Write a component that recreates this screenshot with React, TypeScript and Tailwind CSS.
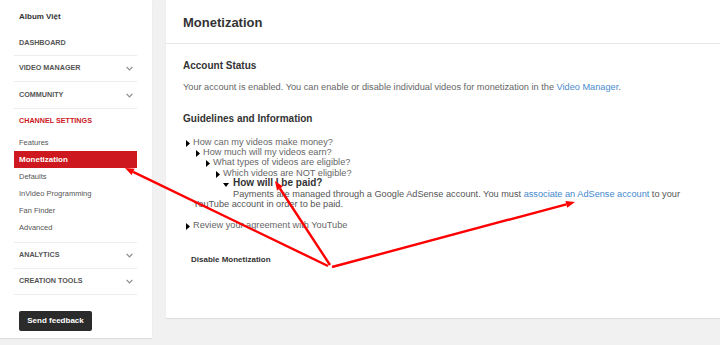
import React from "react";

function Chevron() {
  return (
    <svg width="7" height="5" viewBox="0 0 7 5" className="shrink-0">
      <path d="M0.6 0.8 L3.5 3.8 L6.4 0.8" fill="none" stroke="#8a8a8a" strokeWidth="1.2" />
    </svg>
  );
}

function NavSection({ label }: { label: string }) {
  return (
    <div className="h-[26px] border-t border-[#ececec] flex items-center justify-between pl-[5px] pr-[4px] text-[7.2px] font-bold text-[#555]">
      <span>{label}</span>
      <Chevron />
    </div>
  );
}

const SETTINGS = ["Features", "Monetization", "Defaults", "InVideo Programming", "Fan Finder", "Advanced"];

function Sidebar() {
  return (
    <aside className="w-[152px] h-[338px] shrink-0 bg-white pl-[14px] pr-[15px] shadow-[0_1px_1px_rgba(0,0,0,0.08)]">
      <div className="h-[34px] flex items-center pl-[5px] text-[8px] font-bold text-[#333]">Album Việt</div>
      <div className="h-[21px] pt-[4px] pl-[5px] leading-[10px] text-[7.2px] font-bold text-[#555]">DASHBOARD</div>
      <NavSection label="VIDEO MANAGER" />
      <div className="h-[27px] border-t border-[#ececec] flex items-center justify-between pl-[5px] pr-[4px] text-[7.2px] font-bold text-[#555]">
        <span>COMMUNITY</span>
        <Chevron />
      </div>
      <div className="border-t border-[#ececec] pb-[6px]">
        <div className="h-[25px] flex items-center pl-[5px] text-[7.2px] font-bold text-[#cc181e]">CHANNEL SETTINGS</div>
        {SETTINGS.map((s) =>
          s === "Monetization" ? (
            <div key={s} className="h-[17px] flex items-center pl-[5px] bg-[#cc181e] text-white text-[8px] font-bold">
              {s}
            </div>
          ) : (
            <div key={s} className="h-[17px] flex items-center pl-[5px] text-[#555] text-[7.5px]">
              {s}
            </div>
          )
        )}
      </div>
      <NavSection label="ANALYTICS" />
      <NavSection label="CREATION TOOLS" />
      <div className="border-t border-[#ececec] pt-[11px] pl-[5px]">
        <button className="w-[73px] h-[20px] rounded-[2px] bg-[#2b2b2b] text-white text-[8px] font-bold">
          Send feedback
        </button>
      </div>
    </aside>
  );
}

function RightTri() {
  return (
    <span className="w-[7px] shrink-0 pt-[3px]">
      <svg width="4" height="7" viewBox="0 0 4 7" className="block">
        <polygon points="0,0 4,3.5 0,7" fill="#000" />
      </svg>
    </span>
  );
}

function Item({ level, text }: { level: number; text: string }) {
  return (
    <div className="flex" style={{ paddingLeft: 3 + level * 10 }}>
      <RightTri />
      <span>{text}</span>
    </div>
  );
}

function Arrows() {
  return (
    <svg width="720" height="345" className="absolute inset-0 pointer-events-none">
      <g stroke="#ff0000" strokeWidth="2.4" strokeLinecap="butt">
        <line x1="328" y1="266" x2="133.1" y2="171.9" />
        <line x1="330" y1="265" x2="279.9" y2="188.5" />
        <line x1="332" y1="267" x2="566.3" y2="204.3" />
      </g>
      <g fill="#ff0000">
        <polygon points="125,168 134.6,168.8 131.6,175.1" />
        <polygon points="275,181 282.8,186.6 277,190.4" />
        <polygon points="575,202 567.2,207.7 565.4,200.9" />
      </g>
    </svg>
  );
}

export default function App() {
  return (
    <div className="relative w-[720px] h-[345px] overflow-hidden bg-[#f1f1f1] flex items-start font-['Liberation_Sans',Arial,sans-serif]">
      <Sidebar />
      <main className="ml-[14px] w-[554px] h-[318px] shrink-0 bg-white shadow-[0_1px_1px_rgba(0,0,0,0.08)]">
        <div className="h-[44px] border-b border-[#e8e8e8] flex items-center pl-[17px] pt-[2px] text-[13px] font-bold text-[#333]">
          Monetization
        </div>
        <div className="px-[17px]">
          <div className="mt-[16px] leading-[12px] text-[10px] font-bold text-[#333]">Account Status</div>
          <div className="mt-[9px] leading-[12px] text-[9.2px] text-[#666]">
            Your account is enabled. You can enable or disable individual videos for monetization in the{" "}
            <span className="text-[#4a8bcb]">Video Manager</span>.
          </div>
          <div className="mt-[20px] leading-[12px] text-[10px] font-bold text-[#333]">Guidelines and Information</div>
          <div className="mt-[11.5px] text-[9.2px] leading-[10.4px] text-[#666]">
            <Item level={0} text="How can my videos make money?" />
            <Item level={1} text="How much will my videos earn?" />
            <Item level={2} text="What types of videos are eligible?" />
            <Item level={3} text="Which videos are NOT eligible?" />
            <div className="flex pl-[40px]">
              <span className="w-[10px] shrink-0 pt-[5px]">
                <svg width="6" height="4" viewBox="0 0 6 4" className="block">
                  <polygon points="0,0 6,0 3,4" fill="#000" />
                </svg>
              </span>
              <span className="text-[10px] font-bold text-[#333]">How will I be paid?</span>
            </div>
            <div className="pl-[10px] indent-[40px] text-[#555]">
              Payments are managed through a Google AdSense account. You must{" "}
              <span className="text-[#3f88cc]">associate an AdSense account</span> to your
              <br />
              YouTube account in order to be paid.
            </div>
            <div className="mt-[10.4px]">
              <Item level={0} text="Review your agreement with YouTube" />
            </div>
          </div>
          <div className="mt-[25px] pl-[8px] leading-[10px] text-[8px] font-bold text-[#333]">Disable Monetization</div>
        </div>
      </main>
      <Arrows />
    </div>
  );
}
